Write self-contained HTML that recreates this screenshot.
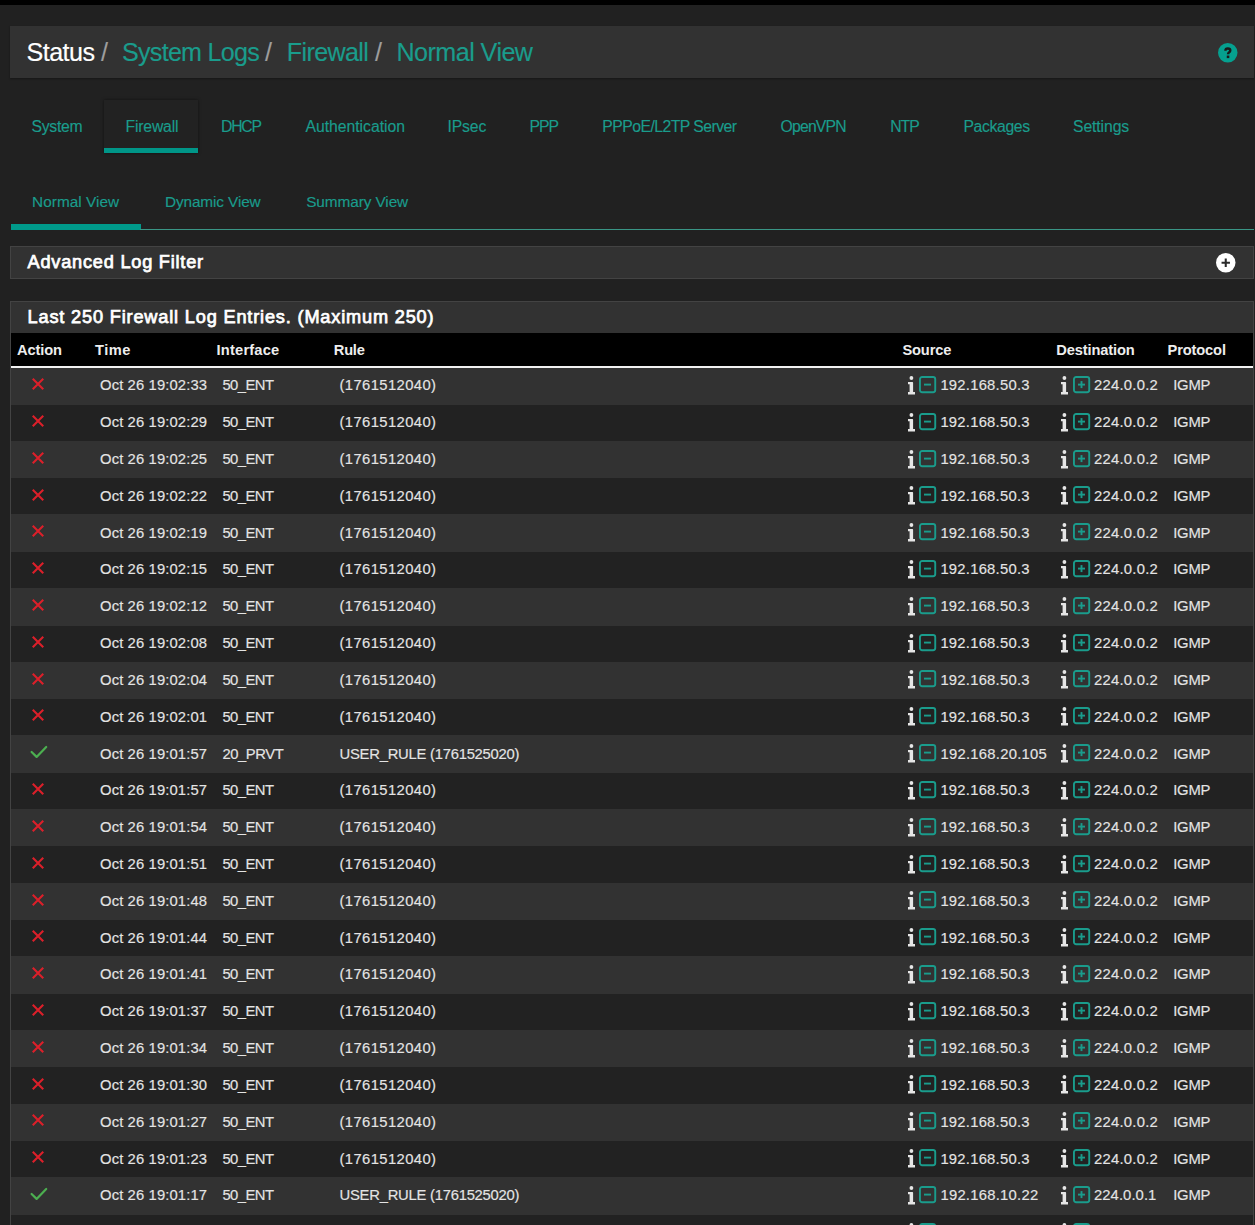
<!DOCTYPE html>
<html><head><meta charset="utf-8"><style>
html,body{margin:0;padding:0;width:1255px;height:1225px;overflow:hidden;background:#212121;}
body{position:relative;font-family:"Liberation Sans", sans-serif;}
.t{position:absolute;white-space:nowrap;line-height:1;-webkit-text-stroke:0.15px currentColor}
.ic{position:absolute;overflow:visible}
.row{position:absolute;left:11px;width:1242px}
.box{position:absolute}
</style></head><body>
<div class="box" style="left:0;top:0;width:1255px;height:5px;background:#000"></div>
<div class="box" style="left:10px;top:26px;width:1244px;height:52px;background:#323232;box-shadow:0 1px 2px rgba(0,0,0,.35)"></div>
<svg class="ic" style="left:1217.7px;top:42.7px" width="19.5" height="19.5" viewBox="0 0 20 20"><circle cx="10" cy="10" r="10" fill="#05a08f"/><path d="M7.6 7.9Q7.6 5.6 10.1 5.6Q12.6 5.6 12.6 7.6Q12.6 8.9 11.2 9.7Q10.3 10.3 10.3 11.5" stroke="#1a1a1a" stroke-width="2.5" fill="none"/><rect x="9.0" y="12.9" width="2.6" height="2.6" fill="#1a1a1a"/></svg>
<div class="box" style="left:104px;top:100px;width:94px;height:53px;background:#222222;box-shadow:0 0 3px rgba(0,0,0,.55)"></div>
<div class="box" style="left:104px;top:148px;width:94px;height:5px;background:#009688"></div>
<div class="box" style="left:10.5px;top:224px;width:130px;height:6px;background:#009a8b"></div>
<div class="box" style="left:140px;top:228.7px;width:1114px;height:1.3px;background:#3a9686"></div>
<div class="box" style="left:10px;top:246px;width:1242px;height:30.5px;background:#323232;border:1px solid #434343"></div>
<svg class="ic" style="left:1215.9px;top:252.8px" width="19.5" height="19.5" viewBox="0 0 20 20"><circle cx="10" cy="10" r="10" fill="#ffffff"/><path d="M10 5.7V14.3M5.7 10H14.3" stroke="#2a2a2a" stroke-width="2.1"/></svg>
<div class="box" style="left:10px;top:301px;width:1242px;height:1000px;background:#323232;border:1px solid #434343"></div>
<div class="box" style="left:11px;top:332.8px;width:1242px;height:33.5px;background:#000"></div>
<div class="box" style="left:11px;top:366.2px;width:1242px;height:2px;background:#f2f2f2"></div>
<div class="box" style="left:11px;top:368px;width:1242px;height:900px;background:#222222"></div>
<div class="row" style="top:368.00px;height:36.62px;background:#323232"></div><div class="row" style="top:440.84px;height:37.42px;background:#323232"></div><div class="row" style="top:514.47px;height:37.42px;background:#323232"></div><div class="row" style="top:588.11px;height:37.42px;background:#323232"></div><div class="row" style="top:661.74px;height:37.42px;background:#323232"></div><div class="row" style="top:734.88px;height:37.92px;background:#323232"></div><div class="row" style="top:809.02px;height:37.42px;background:#323232"></div><div class="row" style="top:882.65px;height:37.42px;background:#323232"></div><div class="row" style="top:956.29px;height:37.42px;background:#323232"></div><div class="row" style="top:1029.92px;height:37.42px;background:#323232"></div><div class="row" style="top:1103.56px;height:37.42px;background:#323232"></div><div class="row" style="top:1176.70px;height:37.92px;background:#323232"></div>
<div class="t" style="left:26.50px;top:40.12px;font-size:25.14px;font-weight:400;color:#ffffff;letter-spacing:-0.547px">Status</div><div class="t" style="left:100.90px;top:40.12px;font-size:25.14px;font-weight:400;color:#9e9e9e;letter-spacing:0.000px">/</div><div class="t" style="left:122.00px;top:40.12px;font-size:25.14px;font-weight:400;color:#1a9c8c;letter-spacing:-0.743px">System Logs</div><div class="t" style="left:265.00px;top:40.12px;font-size:25.14px;font-weight:400;color:#9e9e9e;letter-spacing:0.000px">/</div><div class="t" style="left:286.80px;top:40.12px;font-size:25.14px;font-weight:400;color:#1a9c8c;letter-spacing:-0.652px">Firewall</div><div class="t" style="left:375.00px;top:40.12px;font-size:25.14px;font-weight:400;color:#9e9e9e;letter-spacing:0.000px">/</div><div class="t" style="left:396.50px;top:40.12px;font-size:25.14px;font-weight:400;color:#1a9c8c;letter-spacing:-0.547px">Normal View</div><div class="t" style="left:31.60px;top:118.64px;font-size:15.78px;font-weight:400;color:#1a9c8c;letter-spacing:-0.312px">System</div><div class="t" style="left:125.50px;top:118.64px;font-size:15.78px;font-weight:400;color:#1a9c8c;letter-spacing:-0.188px">Firewall</div><div class="t" style="left:221.00px;top:118.64px;font-size:15.78px;font-weight:400;color:#1a9c8c;letter-spacing:-1.224px">DHCP</div><div class="t" style="left:305.40px;top:118.64px;font-size:15.78px;font-weight:400;color:#1a9c8c;letter-spacing:-0.017px">Authentication</div><div class="t" style="left:447.60px;top:118.64px;font-size:15.78px;font-weight:400;color:#1a9c8c;letter-spacing:-0.184px">IPsec</div><div class="t" style="left:529.40px;top:118.64px;font-size:15.78px;font-weight:400;color:#1a9c8c;letter-spacing:-1.023px">PPP</div><div class="t" style="left:602.30px;top:118.64px;font-size:15.78px;font-weight:400;color:#1a9c8c;letter-spacing:-0.546px">PPPoE/L2TP Server</div><div class="t" style="left:780.60px;top:118.64px;font-size:15.78px;font-weight:400;color:#1a9c8c;letter-spacing:-0.831px">OpenVPN</div><div class="t" style="left:890.20px;top:118.64px;font-size:15.78px;font-weight:400;color:#1a9c8c;letter-spacing:-1.023px">NTP</div><div class="t" style="left:963.40px;top:118.64px;font-size:15.78px;font-weight:400;color:#1a9c8c;letter-spacing:-0.364px">Packages</div><div class="t" style="left:1073.00px;top:118.64px;font-size:15.78px;font-weight:400;color:#1a9c8c;letter-spacing:-0.110px">Settings</div><div class="t" style="left:32.10px;top:194.00px;font-size:15.36px;font-weight:400;color:#1a9c8c;letter-spacing:0.022px">Normal View</div><div class="t" style="left:165.00px;top:194.00px;font-size:15.36px;font-weight:400;color:#1a9c8c;letter-spacing:-0.121px">Dynamic View</div><div class="t" style="left:306.20px;top:194.00px;font-size:15.36px;font-weight:400;color:#1a9c8c;letter-spacing:-0.091px">Summary View</div><div class="t" style="left:27.60px;top:252.63px;font-size:18.16px;font-weight:500;color:#ffffff;letter-spacing:0.779px;-webkit-text-stroke:0.75px currentColor">Advanced Log Filter</div><div class="t" style="left:27.60px;top:307.63px;font-size:18.16px;font-weight:500;color:#ffffff;letter-spacing:0.829px;-webkit-text-stroke:0.75px currentColor">Last 250 Firewall Log Entries. (Maximum 250)</div><div class="t" style="left:17.00px;top:342.59px;font-size:14.66px;font-weight:700;color:#eeeeee;letter-spacing:-0.119px;-webkit-text-stroke:0">Action</div><div class="t" style="left:95.00px;top:342.59px;font-size:14.66px;font-weight:700;color:#eeeeee;letter-spacing:0.482px;-webkit-text-stroke:0">Time</div><div class="t" style="left:216.60px;top:342.59px;font-size:14.66px;font-weight:700;color:#eeeeee;letter-spacing:0.186px;-webkit-text-stroke:0">Interface</div><div class="t" style="left:333.80px;top:342.59px;font-size:14.66px;font-weight:700;color:#eeeeee;letter-spacing:-0.255px;-webkit-text-stroke:0">Rule</div><div class="t" style="left:902.50px;top:342.59px;font-size:14.66px;font-weight:700;color:#eeeeee;letter-spacing:-0.178px;-webkit-text-stroke:0">Source</div><div class="t" style="left:1056.30px;top:342.59px;font-size:14.66px;font-weight:700;color:#eeeeee;letter-spacing:-0.131px;-webkit-text-stroke:0">Destination</div><div class="t" style="left:1167.60px;top:342.59px;font-size:14.66px;font-weight:700;color:#eeeeee;letter-spacing:-0.150px;-webkit-text-stroke:0">Protocol</div><div class="t" style="left:100.00px;top:378.37px;font-size:14.8px;font-weight:400;color:#e4e4e4;letter-spacing:0.121px">Oct 26 19:02:33</div><div class="t" style="left:222.40px;top:378.37px;font-size:14.8px;font-weight:400;color:#e4e4e4;letter-spacing:-0.519px">50_ENT</div><div class="t" style="left:339.50px;top:378.37px;font-size:14.8px;font-weight:400;color:#e4e4e4;letter-spacing:0.395px">(1761512040)</div><div class="t" style="left:940.40px;top:378.37px;font-size:14.8px;font-weight:400;color:#e4e4e4;letter-spacing:0.245px">192.168.50.3</div><div class="t" style="left:1094.00px;top:378.37px;font-size:14.8px;font-weight:400;color:#e4e4e4;letter-spacing:0.260px">224.0.0.2</div><div class="t" style="left:1173.20px;top:378.37px;font-size:14.8px;font-weight:400;color:#e4e4e4;letter-spacing:-0.176px">IGMP</div><div class="t" style="left:100.00px;top:415.19px;font-size:14.8px;font-weight:400;color:#e4e4e4;letter-spacing:0.121px">Oct 26 19:02:29</div><div class="t" style="left:222.40px;top:415.19px;font-size:14.8px;font-weight:400;color:#e4e4e4;letter-spacing:-0.519px">50_ENT</div><div class="t" style="left:339.50px;top:415.19px;font-size:14.8px;font-weight:400;color:#e4e4e4;letter-spacing:0.395px">(1761512040)</div><div class="t" style="left:940.40px;top:415.19px;font-size:14.8px;font-weight:400;color:#e4e4e4;letter-spacing:0.245px">192.168.50.3</div><div class="t" style="left:1094.00px;top:415.19px;font-size:14.8px;font-weight:400;color:#e4e4e4;letter-spacing:0.260px">224.0.0.2</div><div class="t" style="left:1173.20px;top:415.19px;font-size:14.8px;font-weight:400;color:#e4e4e4;letter-spacing:-0.176px">IGMP</div><div class="t" style="left:100.00px;top:452.01px;font-size:14.8px;font-weight:400;color:#e4e4e4;letter-spacing:0.121px">Oct 26 19:02:25</div><div class="t" style="left:222.40px;top:452.01px;font-size:14.8px;font-weight:400;color:#e4e4e4;letter-spacing:-0.519px">50_ENT</div><div class="t" style="left:339.50px;top:452.01px;font-size:14.8px;font-weight:400;color:#e4e4e4;letter-spacing:0.395px">(1761512040)</div><div class="t" style="left:940.40px;top:452.01px;font-size:14.8px;font-weight:400;color:#e4e4e4;letter-spacing:0.245px">192.168.50.3</div><div class="t" style="left:1094.00px;top:452.01px;font-size:14.8px;font-weight:400;color:#e4e4e4;letter-spacing:0.260px">224.0.0.2</div><div class="t" style="left:1173.20px;top:452.01px;font-size:14.8px;font-weight:400;color:#e4e4e4;letter-spacing:-0.176px">IGMP</div><div class="t" style="left:100.00px;top:488.83px;font-size:14.8px;font-weight:400;color:#e4e4e4;letter-spacing:0.121px">Oct 26 19:02:22</div><div class="t" style="left:222.40px;top:488.83px;font-size:14.8px;font-weight:400;color:#e4e4e4;letter-spacing:-0.519px">50_ENT</div><div class="t" style="left:339.50px;top:488.83px;font-size:14.8px;font-weight:400;color:#e4e4e4;letter-spacing:0.395px">(1761512040)</div><div class="t" style="left:940.40px;top:488.83px;font-size:14.8px;font-weight:400;color:#e4e4e4;letter-spacing:0.245px">192.168.50.3</div><div class="t" style="left:1094.00px;top:488.83px;font-size:14.8px;font-weight:400;color:#e4e4e4;letter-spacing:0.260px">224.0.0.2</div><div class="t" style="left:1173.20px;top:488.83px;font-size:14.8px;font-weight:400;color:#e4e4e4;letter-spacing:-0.176px">IGMP</div><div class="t" style="left:100.00px;top:525.64px;font-size:14.8px;font-weight:400;color:#e4e4e4;letter-spacing:0.121px">Oct 26 19:02:19</div><div class="t" style="left:222.40px;top:525.64px;font-size:14.8px;font-weight:400;color:#e4e4e4;letter-spacing:-0.519px">50_ENT</div><div class="t" style="left:339.50px;top:525.64px;font-size:14.8px;font-weight:400;color:#e4e4e4;letter-spacing:0.395px">(1761512040)</div><div class="t" style="left:940.40px;top:525.64px;font-size:14.8px;font-weight:400;color:#e4e4e4;letter-spacing:0.245px">192.168.50.3</div><div class="t" style="left:1094.00px;top:525.64px;font-size:14.8px;font-weight:400;color:#e4e4e4;letter-spacing:0.260px">224.0.0.2</div><div class="t" style="left:1173.20px;top:525.64px;font-size:14.8px;font-weight:400;color:#e4e4e4;letter-spacing:-0.176px">IGMP</div><div class="t" style="left:100.00px;top:562.46px;font-size:14.8px;font-weight:400;color:#e4e4e4;letter-spacing:0.121px">Oct 26 19:02:15</div><div class="t" style="left:222.40px;top:562.46px;font-size:14.8px;font-weight:400;color:#e4e4e4;letter-spacing:-0.519px">50_ENT</div><div class="t" style="left:339.50px;top:562.46px;font-size:14.8px;font-weight:400;color:#e4e4e4;letter-spacing:0.395px">(1761512040)</div><div class="t" style="left:940.40px;top:562.46px;font-size:14.8px;font-weight:400;color:#e4e4e4;letter-spacing:0.245px">192.168.50.3</div><div class="t" style="left:1094.00px;top:562.46px;font-size:14.8px;font-weight:400;color:#e4e4e4;letter-spacing:0.260px">224.0.0.2</div><div class="t" style="left:1173.20px;top:562.46px;font-size:14.8px;font-weight:400;color:#e4e4e4;letter-spacing:-0.176px">IGMP</div><div class="t" style="left:100.00px;top:599.28px;font-size:14.8px;font-weight:400;color:#e4e4e4;letter-spacing:0.121px">Oct 26 19:02:12</div><div class="t" style="left:222.40px;top:599.28px;font-size:14.8px;font-weight:400;color:#e4e4e4;letter-spacing:-0.519px">50_ENT</div><div class="t" style="left:339.50px;top:599.28px;font-size:14.8px;font-weight:400;color:#e4e4e4;letter-spacing:0.395px">(1761512040)</div><div class="t" style="left:940.40px;top:599.28px;font-size:14.8px;font-weight:400;color:#e4e4e4;letter-spacing:0.245px">192.168.50.3</div><div class="t" style="left:1094.00px;top:599.28px;font-size:14.8px;font-weight:400;color:#e4e4e4;letter-spacing:0.260px">224.0.0.2</div><div class="t" style="left:1173.20px;top:599.28px;font-size:14.8px;font-weight:400;color:#e4e4e4;letter-spacing:-0.176px">IGMP</div><div class="t" style="left:100.00px;top:636.10px;font-size:14.8px;font-weight:400;color:#e4e4e4;letter-spacing:0.121px">Oct 26 19:02:08</div><div class="t" style="left:222.40px;top:636.10px;font-size:14.8px;font-weight:400;color:#e4e4e4;letter-spacing:-0.519px">50_ENT</div><div class="t" style="left:339.50px;top:636.10px;font-size:14.8px;font-weight:400;color:#e4e4e4;letter-spacing:0.395px">(1761512040)</div><div class="t" style="left:940.40px;top:636.10px;font-size:14.8px;font-weight:400;color:#e4e4e4;letter-spacing:0.245px">192.168.50.3</div><div class="t" style="left:1094.00px;top:636.10px;font-size:14.8px;font-weight:400;color:#e4e4e4;letter-spacing:0.260px">224.0.0.2</div><div class="t" style="left:1173.20px;top:636.10px;font-size:14.8px;font-weight:400;color:#e4e4e4;letter-spacing:-0.176px">IGMP</div><div class="t" style="left:100.00px;top:672.92px;font-size:14.8px;font-weight:400;color:#e4e4e4;letter-spacing:0.121px">Oct 26 19:02:04</div><div class="t" style="left:222.40px;top:672.92px;font-size:14.8px;font-weight:400;color:#e4e4e4;letter-spacing:-0.519px">50_ENT</div><div class="t" style="left:339.50px;top:672.92px;font-size:14.8px;font-weight:400;color:#e4e4e4;letter-spacing:0.395px">(1761512040)</div><div class="t" style="left:940.40px;top:672.92px;font-size:14.8px;font-weight:400;color:#e4e4e4;letter-spacing:0.245px">192.168.50.3</div><div class="t" style="left:1094.00px;top:672.92px;font-size:14.8px;font-weight:400;color:#e4e4e4;letter-spacing:0.260px">224.0.0.2</div><div class="t" style="left:1173.20px;top:672.92px;font-size:14.8px;font-weight:400;color:#e4e4e4;letter-spacing:-0.176px">IGMP</div><div class="t" style="left:100.00px;top:709.73px;font-size:14.8px;font-weight:400;color:#e4e4e4;letter-spacing:0.121px">Oct 26 19:02:01</div><div class="t" style="left:222.40px;top:709.73px;font-size:14.8px;font-weight:400;color:#e4e4e4;letter-spacing:-0.519px">50_ENT</div><div class="t" style="left:339.50px;top:709.73px;font-size:14.8px;font-weight:400;color:#e4e4e4;letter-spacing:0.395px">(1761512040)</div><div class="t" style="left:940.40px;top:709.73px;font-size:14.8px;font-weight:400;color:#e4e4e4;letter-spacing:0.245px">192.168.50.3</div><div class="t" style="left:1094.00px;top:709.73px;font-size:14.8px;font-weight:400;color:#e4e4e4;letter-spacing:0.260px">224.0.0.2</div><div class="t" style="left:1173.20px;top:709.73px;font-size:14.8px;font-weight:400;color:#e4e4e4;letter-spacing:-0.176px">IGMP</div><div class="t" style="left:100.00px;top:746.55px;font-size:14.8px;font-weight:400;color:#e4e4e4;letter-spacing:0.121px">Oct 26 19:01:57</div><div class="t" style="left:222.40px;top:746.55px;font-size:14.8px;font-weight:400;color:#e4e4e4;letter-spacing:-0.432px">20_PRVT</div><div class="t" style="left:339.50px;top:746.55px;font-size:14.8px;font-weight:400;color:#e4e4e4;letter-spacing:-0.242px">USER_RULE (1761525020)</div><div class="t" style="left:940.40px;top:746.55px;font-size:14.8px;font-weight:400;color:#e4e4e4;letter-spacing:0.272px">192.168.20.105</div><div class="t" style="left:1094.00px;top:746.55px;font-size:14.8px;font-weight:400;color:#e4e4e4;letter-spacing:0.260px">224.0.0.2</div><div class="t" style="left:1173.20px;top:746.55px;font-size:14.8px;font-weight:400;color:#e4e4e4;letter-spacing:-0.176px">IGMP</div><div class="t" style="left:100.00px;top:783.37px;font-size:14.8px;font-weight:400;color:#e4e4e4;letter-spacing:0.121px">Oct 26 19:01:57</div><div class="t" style="left:222.40px;top:783.37px;font-size:14.8px;font-weight:400;color:#e4e4e4;letter-spacing:-0.519px">50_ENT</div><div class="t" style="left:339.50px;top:783.37px;font-size:14.8px;font-weight:400;color:#e4e4e4;letter-spacing:0.395px">(1761512040)</div><div class="t" style="left:940.40px;top:783.37px;font-size:14.8px;font-weight:400;color:#e4e4e4;letter-spacing:0.245px">192.168.50.3</div><div class="t" style="left:1094.00px;top:783.37px;font-size:14.8px;font-weight:400;color:#e4e4e4;letter-spacing:0.260px">224.0.0.2</div><div class="t" style="left:1173.20px;top:783.37px;font-size:14.8px;font-weight:400;color:#e4e4e4;letter-spacing:-0.176px">IGMP</div><div class="t" style="left:100.00px;top:820.19px;font-size:14.8px;font-weight:400;color:#e4e4e4;letter-spacing:0.121px">Oct 26 19:01:54</div><div class="t" style="left:222.40px;top:820.19px;font-size:14.8px;font-weight:400;color:#e4e4e4;letter-spacing:-0.519px">50_ENT</div><div class="t" style="left:339.50px;top:820.19px;font-size:14.8px;font-weight:400;color:#e4e4e4;letter-spacing:0.395px">(1761512040)</div><div class="t" style="left:940.40px;top:820.19px;font-size:14.8px;font-weight:400;color:#e4e4e4;letter-spacing:0.245px">192.168.50.3</div><div class="t" style="left:1094.00px;top:820.19px;font-size:14.8px;font-weight:400;color:#e4e4e4;letter-spacing:0.260px">224.0.0.2</div><div class="t" style="left:1173.20px;top:820.19px;font-size:14.8px;font-weight:400;color:#e4e4e4;letter-spacing:-0.176px">IGMP</div><div class="t" style="left:100.00px;top:857.01px;font-size:14.8px;font-weight:400;color:#e4e4e4;letter-spacing:0.121px">Oct 26 19:01:51</div><div class="t" style="left:222.40px;top:857.01px;font-size:14.8px;font-weight:400;color:#e4e4e4;letter-spacing:-0.519px">50_ENT</div><div class="t" style="left:339.50px;top:857.01px;font-size:14.8px;font-weight:400;color:#e4e4e4;letter-spacing:0.395px">(1761512040)</div><div class="t" style="left:940.40px;top:857.01px;font-size:14.8px;font-weight:400;color:#e4e4e4;letter-spacing:0.245px">192.168.50.3</div><div class="t" style="left:1094.00px;top:857.01px;font-size:14.8px;font-weight:400;color:#e4e4e4;letter-spacing:0.260px">224.0.0.2</div><div class="t" style="left:1173.20px;top:857.01px;font-size:14.8px;font-weight:400;color:#e4e4e4;letter-spacing:-0.176px">IGMP</div><div class="t" style="left:100.00px;top:893.82px;font-size:14.8px;font-weight:400;color:#e4e4e4;letter-spacing:0.121px">Oct 26 19:01:48</div><div class="t" style="left:222.40px;top:893.82px;font-size:14.8px;font-weight:400;color:#e4e4e4;letter-spacing:-0.519px">50_ENT</div><div class="t" style="left:339.50px;top:893.82px;font-size:14.8px;font-weight:400;color:#e4e4e4;letter-spacing:0.395px">(1761512040)</div><div class="t" style="left:940.40px;top:893.82px;font-size:14.8px;font-weight:400;color:#e4e4e4;letter-spacing:0.245px">192.168.50.3</div><div class="t" style="left:1094.00px;top:893.82px;font-size:14.8px;font-weight:400;color:#e4e4e4;letter-spacing:0.260px">224.0.0.2</div><div class="t" style="left:1173.20px;top:893.82px;font-size:14.8px;font-weight:400;color:#e4e4e4;letter-spacing:-0.176px">IGMP</div><div class="t" style="left:100.00px;top:930.64px;font-size:14.8px;font-weight:400;color:#e4e4e4;letter-spacing:0.121px">Oct 26 19:01:44</div><div class="t" style="left:222.40px;top:930.64px;font-size:14.8px;font-weight:400;color:#e4e4e4;letter-spacing:-0.519px">50_ENT</div><div class="t" style="left:339.50px;top:930.64px;font-size:14.8px;font-weight:400;color:#e4e4e4;letter-spacing:0.395px">(1761512040)</div><div class="t" style="left:940.40px;top:930.64px;font-size:14.8px;font-weight:400;color:#e4e4e4;letter-spacing:0.245px">192.168.50.3</div><div class="t" style="left:1094.00px;top:930.64px;font-size:14.8px;font-weight:400;color:#e4e4e4;letter-spacing:0.260px">224.0.0.2</div><div class="t" style="left:1173.20px;top:930.64px;font-size:14.8px;font-weight:400;color:#e4e4e4;letter-spacing:-0.176px">IGMP</div><div class="t" style="left:100.00px;top:967.46px;font-size:14.8px;font-weight:400;color:#e4e4e4;letter-spacing:0.121px">Oct 26 19:01:41</div><div class="t" style="left:222.40px;top:967.46px;font-size:14.8px;font-weight:400;color:#e4e4e4;letter-spacing:-0.519px">50_ENT</div><div class="t" style="left:339.50px;top:967.46px;font-size:14.8px;font-weight:400;color:#e4e4e4;letter-spacing:0.395px">(1761512040)</div><div class="t" style="left:940.40px;top:967.46px;font-size:14.8px;font-weight:400;color:#e4e4e4;letter-spacing:0.245px">192.168.50.3</div><div class="t" style="left:1094.00px;top:967.46px;font-size:14.8px;font-weight:400;color:#e4e4e4;letter-spacing:0.260px">224.0.0.2</div><div class="t" style="left:1173.20px;top:967.46px;font-size:14.8px;font-weight:400;color:#e4e4e4;letter-spacing:-0.176px">IGMP</div><div class="t" style="left:100.00px;top:1004.28px;font-size:14.8px;font-weight:400;color:#e4e4e4;letter-spacing:0.121px">Oct 26 19:01:37</div><div class="t" style="left:222.40px;top:1004.28px;font-size:14.8px;font-weight:400;color:#e4e4e4;letter-spacing:-0.519px">50_ENT</div><div class="t" style="left:339.50px;top:1004.28px;font-size:14.8px;font-weight:400;color:#e4e4e4;letter-spacing:0.395px">(1761512040)</div><div class="t" style="left:940.40px;top:1004.28px;font-size:14.8px;font-weight:400;color:#e4e4e4;letter-spacing:0.245px">192.168.50.3</div><div class="t" style="left:1094.00px;top:1004.28px;font-size:14.8px;font-weight:400;color:#e4e4e4;letter-spacing:0.260px">224.0.0.2</div><div class="t" style="left:1173.20px;top:1004.28px;font-size:14.8px;font-weight:400;color:#e4e4e4;letter-spacing:-0.176px">IGMP</div><div class="t" style="left:100.00px;top:1041.10px;font-size:14.8px;font-weight:400;color:#e4e4e4;letter-spacing:0.121px">Oct 26 19:01:34</div><div class="t" style="left:222.40px;top:1041.10px;font-size:14.8px;font-weight:400;color:#e4e4e4;letter-spacing:-0.519px">50_ENT</div><div class="t" style="left:339.50px;top:1041.10px;font-size:14.8px;font-weight:400;color:#e4e4e4;letter-spacing:0.395px">(1761512040)</div><div class="t" style="left:940.40px;top:1041.10px;font-size:14.8px;font-weight:400;color:#e4e4e4;letter-spacing:0.245px">192.168.50.3</div><div class="t" style="left:1094.00px;top:1041.10px;font-size:14.8px;font-weight:400;color:#e4e4e4;letter-spacing:0.260px">224.0.0.2</div><div class="t" style="left:1173.20px;top:1041.10px;font-size:14.8px;font-weight:400;color:#e4e4e4;letter-spacing:-0.176px">IGMP</div><div class="t" style="left:100.00px;top:1077.91px;font-size:14.8px;font-weight:400;color:#e4e4e4;letter-spacing:0.121px">Oct 26 19:01:30</div><div class="t" style="left:222.40px;top:1077.91px;font-size:14.8px;font-weight:400;color:#e4e4e4;letter-spacing:-0.519px">50_ENT</div><div class="t" style="left:339.50px;top:1077.91px;font-size:14.8px;font-weight:400;color:#e4e4e4;letter-spacing:0.395px">(1761512040)</div><div class="t" style="left:940.40px;top:1077.91px;font-size:14.8px;font-weight:400;color:#e4e4e4;letter-spacing:0.245px">192.168.50.3</div><div class="t" style="left:1094.00px;top:1077.91px;font-size:14.8px;font-weight:400;color:#e4e4e4;letter-spacing:0.260px">224.0.0.2</div><div class="t" style="left:1173.20px;top:1077.91px;font-size:14.8px;font-weight:400;color:#e4e4e4;letter-spacing:-0.176px">IGMP</div><div class="t" style="left:100.00px;top:1114.73px;font-size:14.8px;font-weight:400;color:#e4e4e4;letter-spacing:0.121px">Oct 26 19:01:27</div><div class="t" style="left:222.40px;top:1114.73px;font-size:14.8px;font-weight:400;color:#e4e4e4;letter-spacing:-0.519px">50_ENT</div><div class="t" style="left:339.50px;top:1114.73px;font-size:14.8px;font-weight:400;color:#e4e4e4;letter-spacing:0.395px">(1761512040)</div><div class="t" style="left:940.40px;top:1114.73px;font-size:14.8px;font-weight:400;color:#e4e4e4;letter-spacing:0.245px">192.168.50.3</div><div class="t" style="left:1094.00px;top:1114.73px;font-size:14.8px;font-weight:400;color:#e4e4e4;letter-spacing:0.260px">224.0.0.2</div><div class="t" style="left:1173.20px;top:1114.73px;font-size:14.8px;font-weight:400;color:#e4e4e4;letter-spacing:-0.176px">IGMP</div><div class="t" style="left:100.00px;top:1151.55px;font-size:14.8px;font-weight:400;color:#e4e4e4;letter-spacing:0.121px">Oct 26 19:01:23</div><div class="t" style="left:222.40px;top:1151.55px;font-size:14.8px;font-weight:400;color:#e4e4e4;letter-spacing:-0.519px">50_ENT</div><div class="t" style="left:339.50px;top:1151.55px;font-size:14.8px;font-weight:400;color:#e4e4e4;letter-spacing:0.395px">(1761512040)</div><div class="t" style="left:940.40px;top:1151.55px;font-size:14.8px;font-weight:400;color:#e4e4e4;letter-spacing:0.245px">192.168.50.3</div><div class="t" style="left:1094.00px;top:1151.55px;font-size:14.8px;font-weight:400;color:#e4e4e4;letter-spacing:0.260px">224.0.0.2</div><div class="t" style="left:1173.20px;top:1151.55px;font-size:14.8px;font-weight:400;color:#e4e4e4;letter-spacing:-0.176px">IGMP</div><div class="t" style="left:100.00px;top:1188.37px;font-size:14.8px;font-weight:400;color:#e4e4e4;letter-spacing:0.121px">Oct 26 19:01:17</div><div class="t" style="left:222.40px;top:1188.37px;font-size:14.8px;font-weight:400;color:#e4e4e4;letter-spacing:-0.519px">50_ENT</div><div class="t" style="left:339.50px;top:1188.37px;font-size:14.8px;font-weight:400;color:#e4e4e4;letter-spacing:-0.242px">USER_RULE (1761525020)</div><div class="t" style="left:940.40px;top:1188.37px;font-size:14.8px;font-weight:400;color:#e4e4e4;letter-spacing:0.263px">192.168.10.22</div><div class="t" style="left:1094.00px;top:1188.37px;font-size:14.8px;font-weight:400;color:#e4e4e4;letter-spacing:0.073px">224.0.0.1</div><div class="t" style="left:1173.20px;top:1188.37px;font-size:14.8px;font-weight:400;color:#e4e4e4;letter-spacing:-0.176px">IGMP</div><div class="t" style="left:100.00px;top:1225.19px;font-size:14.8px;font-weight:400;color:#e4e4e4;letter-spacing:0.121px">Oct 26 19:01:14</div><div class="t" style="left:222.40px;top:1225.19px;font-size:14.8px;font-weight:400;color:#e4e4e4;letter-spacing:-0.519px">50_ENT</div><div class="t" style="left:339.50px;top:1225.19px;font-size:14.8px;font-weight:400;color:#e4e4e4;letter-spacing:0.395px">(1761512040)</div><div class="t" style="left:940.40px;top:1225.19px;font-size:14.8px;font-weight:400;color:#e4e4e4;letter-spacing:0.245px">192.168.50.3</div><div class="t" style="left:1094.00px;top:1225.19px;font-size:14.8px;font-weight:400;color:#e4e4e4;letter-spacing:0.260px">224.0.0.2</div><div class="t" style="left:1173.20px;top:1225.19px;font-size:14.8px;font-weight:400;color:#e4e4e4;letter-spacing:-0.176px">IGMP</div>
<svg class="ic" style="left:30.90px;top:377.05px" width="14" height="14" viewBox="0 0 14 14"><path d="M1.75 1.75L12.25 12.25M12.25 1.75L1.75 12.25" stroke="#dc1f2a" stroke-width="2.1"/></svg><svg class="ic" style="left:907.90px;top:375.90px" width="8" height="19" viewBox="0 0 8 19"><circle cx="3.4" cy="2.0" r="1.9" fill="#e6e6e6"/><path d="M0 6.1H4.4Q5.1 6.1 5.1 6.8V16H7V18.5H0V16H1.6V8.3H0Z" fill="#e6e6e6"/></svg><svg class="ic" style="left:918.80px;top:375.90px" width="17.2" height="17.2" viewBox="0 0 17.2 17.2"><rect x="0.95" y="0.95" width="15.3" height="15.3" rx="2.2" fill="none" stroke="#1a9c8c" stroke-width="1.9"/><path d="M5 8.6H12" stroke="#1a9c8c" stroke-width="1.9"/></svg><svg class="ic" style="left:1061.40px;top:375.90px" width="8" height="19" viewBox="0 0 8 19"><circle cx="3.4" cy="2.0" r="1.9" fill="#e6e6e6"/><path d="M0 6.1H4.4Q5.1 6.1 5.1 6.8V16H7V18.5H0V16H1.6V8.3H0Z" fill="#e6e6e6"/></svg><svg class="ic" style="left:1072.50px;top:375.90px" width="17.2" height="17.2" viewBox="0 0 17.2 17.2"><rect x="0.95" y="0.95" width="15.3" height="15.3" rx="2.2" fill="none" stroke="#1a9c8c" stroke-width="1.9"/><path d="M5 8.6H12" stroke="#1a9c8c" stroke-width="1.9"/><path d="M8.5 5.1V12.1" stroke="#1a9c8c" stroke-width="1.9"/></svg><svg class="ic" style="left:30.90px;top:413.87px" width="14" height="14" viewBox="0 0 14 14"><path d="M1.75 1.75L12.25 12.25M12.25 1.75L1.75 12.25" stroke="#dc1f2a" stroke-width="2.1"/></svg><svg class="ic" style="left:907.90px;top:412.72px" width="8" height="19" viewBox="0 0 8 19"><circle cx="3.4" cy="2.0" r="1.9" fill="#e6e6e6"/><path d="M0 6.1H4.4Q5.1 6.1 5.1 6.8V16H7V18.5H0V16H1.6V8.3H0Z" fill="#e6e6e6"/></svg><svg class="ic" style="left:918.80px;top:412.72px" width="17.2" height="17.2" viewBox="0 0 17.2 17.2"><rect x="0.95" y="0.95" width="15.3" height="15.3" rx="2.2" fill="none" stroke="#1a9c8c" stroke-width="1.9"/><path d="M5 8.6H12" stroke="#1a9c8c" stroke-width="1.9"/></svg><svg class="ic" style="left:1061.40px;top:412.72px" width="8" height="19" viewBox="0 0 8 19"><circle cx="3.4" cy="2.0" r="1.9" fill="#e6e6e6"/><path d="M0 6.1H4.4Q5.1 6.1 5.1 6.8V16H7V18.5H0V16H1.6V8.3H0Z" fill="#e6e6e6"/></svg><svg class="ic" style="left:1072.50px;top:412.72px" width="17.2" height="17.2" viewBox="0 0 17.2 17.2"><rect x="0.95" y="0.95" width="15.3" height="15.3" rx="2.2" fill="none" stroke="#1a9c8c" stroke-width="1.9"/><path d="M5 8.6H12" stroke="#1a9c8c" stroke-width="1.9"/><path d="M8.5 5.1V12.1" stroke="#1a9c8c" stroke-width="1.9"/></svg><svg class="ic" style="left:30.90px;top:450.69px" width="14" height="14" viewBox="0 0 14 14"><path d="M1.75 1.75L12.25 12.25M12.25 1.75L1.75 12.25" stroke="#dc1f2a" stroke-width="2.1"/></svg><svg class="ic" style="left:907.90px;top:449.54px" width="8" height="19" viewBox="0 0 8 19"><circle cx="3.4" cy="2.0" r="1.9" fill="#e6e6e6"/><path d="M0 6.1H4.4Q5.1 6.1 5.1 6.8V16H7V18.5H0V16H1.6V8.3H0Z" fill="#e6e6e6"/></svg><svg class="ic" style="left:918.80px;top:449.54px" width="17.2" height="17.2" viewBox="0 0 17.2 17.2"><rect x="0.95" y="0.95" width="15.3" height="15.3" rx="2.2" fill="none" stroke="#1a9c8c" stroke-width="1.9"/><path d="M5 8.6H12" stroke="#1a9c8c" stroke-width="1.9"/></svg><svg class="ic" style="left:1061.40px;top:449.54px" width="8" height="19" viewBox="0 0 8 19"><circle cx="3.4" cy="2.0" r="1.9" fill="#e6e6e6"/><path d="M0 6.1H4.4Q5.1 6.1 5.1 6.8V16H7V18.5H0V16H1.6V8.3H0Z" fill="#e6e6e6"/></svg><svg class="ic" style="left:1072.50px;top:449.54px" width="17.2" height="17.2" viewBox="0 0 17.2 17.2"><rect x="0.95" y="0.95" width="15.3" height="15.3" rx="2.2" fill="none" stroke="#1a9c8c" stroke-width="1.9"/><path d="M5 8.6H12" stroke="#1a9c8c" stroke-width="1.9"/><path d="M8.5 5.1V12.1" stroke="#1a9c8c" stroke-width="1.9"/></svg><svg class="ic" style="left:30.90px;top:487.50px" width="14" height="14" viewBox="0 0 14 14"><path d="M1.75 1.75L12.25 12.25M12.25 1.75L1.75 12.25" stroke="#dc1f2a" stroke-width="2.1"/></svg><svg class="ic" style="left:907.90px;top:486.35px" width="8" height="19" viewBox="0 0 8 19"><circle cx="3.4" cy="2.0" r="1.9" fill="#e6e6e6"/><path d="M0 6.1H4.4Q5.1 6.1 5.1 6.8V16H7V18.5H0V16H1.6V8.3H0Z" fill="#e6e6e6"/></svg><svg class="ic" style="left:918.80px;top:486.35px" width="17.2" height="17.2" viewBox="0 0 17.2 17.2"><rect x="0.95" y="0.95" width="15.3" height="15.3" rx="2.2" fill="none" stroke="#1a9c8c" stroke-width="1.9"/><path d="M5 8.6H12" stroke="#1a9c8c" stroke-width="1.9"/></svg><svg class="ic" style="left:1061.40px;top:486.35px" width="8" height="19" viewBox="0 0 8 19"><circle cx="3.4" cy="2.0" r="1.9" fill="#e6e6e6"/><path d="M0 6.1H4.4Q5.1 6.1 5.1 6.8V16H7V18.5H0V16H1.6V8.3H0Z" fill="#e6e6e6"/></svg><svg class="ic" style="left:1072.50px;top:486.35px" width="17.2" height="17.2" viewBox="0 0 17.2 17.2"><rect x="0.95" y="0.95" width="15.3" height="15.3" rx="2.2" fill="none" stroke="#1a9c8c" stroke-width="1.9"/><path d="M5 8.6H12" stroke="#1a9c8c" stroke-width="1.9"/><path d="M8.5 5.1V12.1" stroke="#1a9c8c" stroke-width="1.9"/></svg><svg class="ic" style="left:30.90px;top:524.32px" width="14" height="14" viewBox="0 0 14 14"><path d="M1.75 1.75L12.25 12.25M12.25 1.75L1.75 12.25" stroke="#dc1f2a" stroke-width="2.1"/></svg><svg class="ic" style="left:907.90px;top:523.17px" width="8" height="19" viewBox="0 0 8 19"><circle cx="3.4" cy="2.0" r="1.9" fill="#e6e6e6"/><path d="M0 6.1H4.4Q5.1 6.1 5.1 6.8V16H7V18.5H0V16H1.6V8.3H0Z" fill="#e6e6e6"/></svg><svg class="ic" style="left:918.80px;top:523.17px" width="17.2" height="17.2" viewBox="0 0 17.2 17.2"><rect x="0.95" y="0.95" width="15.3" height="15.3" rx="2.2" fill="none" stroke="#1a9c8c" stroke-width="1.9"/><path d="M5 8.6H12" stroke="#1a9c8c" stroke-width="1.9"/></svg><svg class="ic" style="left:1061.40px;top:523.17px" width="8" height="19" viewBox="0 0 8 19"><circle cx="3.4" cy="2.0" r="1.9" fill="#e6e6e6"/><path d="M0 6.1H4.4Q5.1 6.1 5.1 6.8V16H7V18.5H0V16H1.6V8.3H0Z" fill="#e6e6e6"/></svg><svg class="ic" style="left:1072.50px;top:523.17px" width="17.2" height="17.2" viewBox="0 0 17.2 17.2"><rect x="0.95" y="0.95" width="15.3" height="15.3" rx="2.2" fill="none" stroke="#1a9c8c" stroke-width="1.9"/><path d="M5 8.6H12" stroke="#1a9c8c" stroke-width="1.9"/><path d="M8.5 5.1V12.1" stroke="#1a9c8c" stroke-width="1.9"/></svg><svg class="ic" style="left:30.90px;top:561.14px" width="14" height="14" viewBox="0 0 14 14"><path d="M1.75 1.75L12.25 12.25M12.25 1.75L1.75 12.25" stroke="#dc1f2a" stroke-width="2.1"/></svg><svg class="ic" style="left:907.90px;top:559.99px" width="8" height="19" viewBox="0 0 8 19"><circle cx="3.4" cy="2.0" r="1.9" fill="#e6e6e6"/><path d="M0 6.1H4.4Q5.1 6.1 5.1 6.8V16H7V18.5H0V16H1.6V8.3H0Z" fill="#e6e6e6"/></svg><svg class="ic" style="left:918.80px;top:559.99px" width="17.2" height="17.2" viewBox="0 0 17.2 17.2"><rect x="0.95" y="0.95" width="15.3" height="15.3" rx="2.2" fill="none" stroke="#1a9c8c" stroke-width="1.9"/><path d="M5 8.6H12" stroke="#1a9c8c" stroke-width="1.9"/></svg><svg class="ic" style="left:1061.40px;top:559.99px" width="8" height="19" viewBox="0 0 8 19"><circle cx="3.4" cy="2.0" r="1.9" fill="#e6e6e6"/><path d="M0 6.1H4.4Q5.1 6.1 5.1 6.8V16H7V18.5H0V16H1.6V8.3H0Z" fill="#e6e6e6"/></svg><svg class="ic" style="left:1072.50px;top:559.99px" width="17.2" height="17.2" viewBox="0 0 17.2 17.2"><rect x="0.95" y="0.95" width="15.3" height="15.3" rx="2.2" fill="none" stroke="#1a9c8c" stroke-width="1.9"/><path d="M5 8.6H12" stroke="#1a9c8c" stroke-width="1.9"/><path d="M8.5 5.1V12.1" stroke="#1a9c8c" stroke-width="1.9"/></svg><svg class="ic" style="left:30.90px;top:597.96px" width="14" height="14" viewBox="0 0 14 14"><path d="M1.75 1.75L12.25 12.25M12.25 1.75L1.75 12.25" stroke="#dc1f2a" stroke-width="2.1"/></svg><svg class="ic" style="left:907.90px;top:596.81px" width="8" height="19" viewBox="0 0 8 19"><circle cx="3.4" cy="2.0" r="1.9" fill="#e6e6e6"/><path d="M0 6.1H4.4Q5.1 6.1 5.1 6.8V16H7V18.5H0V16H1.6V8.3H0Z" fill="#e6e6e6"/></svg><svg class="ic" style="left:918.80px;top:596.81px" width="17.2" height="17.2" viewBox="0 0 17.2 17.2"><rect x="0.95" y="0.95" width="15.3" height="15.3" rx="2.2" fill="none" stroke="#1a9c8c" stroke-width="1.9"/><path d="M5 8.6H12" stroke="#1a9c8c" stroke-width="1.9"/></svg><svg class="ic" style="left:1061.40px;top:596.81px" width="8" height="19" viewBox="0 0 8 19"><circle cx="3.4" cy="2.0" r="1.9" fill="#e6e6e6"/><path d="M0 6.1H4.4Q5.1 6.1 5.1 6.8V16H7V18.5H0V16H1.6V8.3H0Z" fill="#e6e6e6"/></svg><svg class="ic" style="left:1072.50px;top:596.81px" width="17.2" height="17.2" viewBox="0 0 17.2 17.2"><rect x="0.95" y="0.95" width="15.3" height="15.3" rx="2.2" fill="none" stroke="#1a9c8c" stroke-width="1.9"/><path d="M5 8.6H12" stroke="#1a9c8c" stroke-width="1.9"/><path d="M8.5 5.1V12.1" stroke="#1a9c8c" stroke-width="1.9"/></svg><svg class="ic" style="left:30.90px;top:634.78px" width="14" height="14" viewBox="0 0 14 14"><path d="M1.75 1.75L12.25 12.25M12.25 1.75L1.75 12.25" stroke="#dc1f2a" stroke-width="2.1"/></svg><svg class="ic" style="left:907.90px;top:633.63px" width="8" height="19" viewBox="0 0 8 19"><circle cx="3.4" cy="2.0" r="1.9" fill="#e6e6e6"/><path d="M0 6.1H4.4Q5.1 6.1 5.1 6.8V16H7V18.5H0V16H1.6V8.3H0Z" fill="#e6e6e6"/></svg><svg class="ic" style="left:918.80px;top:633.63px" width="17.2" height="17.2" viewBox="0 0 17.2 17.2"><rect x="0.95" y="0.95" width="15.3" height="15.3" rx="2.2" fill="none" stroke="#1a9c8c" stroke-width="1.9"/><path d="M5 8.6H12" stroke="#1a9c8c" stroke-width="1.9"/></svg><svg class="ic" style="left:1061.40px;top:633.63px" width="8" height="19" viewBox="0 0 8 19"><circle cx="3.4" cy="2.0" r="1.9" fill="#e6e6e6"/><path d="M0 6.1H4.4Q5.1 6.1 5.1 6.8V16H7V18.5H0V16H1.6V8.3H0Z" fill="#e6e6e6"/></svg><svg class="ic" style="left:1072.50px;top:633.63px" width="17.2" height="17.2" viewBox="0 0 17.2 17.2"><rect x="0.95" y="0.95" width="15.3" height="15.3" rx="2.2" fill="none" stroke="#1a9c8c" stroke-width="1.9"/><path d="M5 8.6H12" stroke="#1a9c8c" stroke-width="1.9"/><path d="M8.5 5.1V12.1" stroke="#1a9c8c" stroke-width="1.9"/></svg><svg class="ic" style="left:30.90px;top:671.59px" width="14" height="14" viewBox="0 0 14 14"><path d="M1.75 1.75L12.25 12.25M12.25 1.75L1.75 12.25" stroke="#dc1f2a" stroke-width="2.1"/></svg><svg class="ic" style="left:907.90px;top:670.44px" width="8" height="19" viewBox="0 0 8 19"><circle cx="3.4" cy="2.0" r="1.9" fill="#e6e6e6"/><path d="M0 6.1H4.4Q5.1 6.1 5.1 6.8V16H7V18.5H0V16H1.6V8.3H0Z" fill="#e6e6e6"/></svg><svg class="ic" style="left:918.80px;top:670.44px" width="17.2" height="17.2" viewBox="0 0 17.2 17.2"><rect x="0.95" y="0.95" width="15.3" height="15.3" rx="2.2" fill="none" stroke="#1a9c8c" stroke-width="1.9"/><path d="M5 8.6H12" stroke="#1a9c8c" stroke-width="1.9"/></svg><svg class="ic" style="left:1061.40px;top:670.44px" width="8" height="19" viewBox="0 0 8 19"><circle cx="3.4" cy="2.0" r="1.9" fill="#e6e6e6"/><path d="M0 6.1H4.4Q5.1 6.1 5.1 6.8V16H7V18.5H0V16H1.6V8.3H0Z" fill="#e6e6e6"/></svg><svg class="ic" style="left:1072.50px;top:670.44px" width="17.2" height="17.2" viewBox="0 0 17.2 17.2"><rect x="0.95" y="0.95" width="15.3" height="15.3" rx="2.2" fill="none" stroke="#1a9c8c" stroke-width="1.9"/><path d="M5 8.6H12" stroke="#1a9c8c" stroke-width="1.9"/><path d="M8.5 5.1V12.1" stroke="#1a9c8c" stroke-width="1.9"/></svg><svg class="ic" style="left:30.90px;top:708.41px" width="14" height="14" viewBox="0 0 14 14"><path d="M1.75 1.75L12.25 12.25M12.25 1.75L1.75 12.25" stroke="#dc1f2a" stroke-width="2.1"/></svg><svg class="ic" style="left:907.90px;top:707.26px" width="8" height="19" viewBox="0 0 8 19"><circle cx="3.4" cy="2.0" r="1.9" fill="#e6e6e6"/><path d="M0 6.1H4.4Q5.1 6.1 5.1 6.8V16H7V18.5H0V16H1.6V8.3H0Z" fill="#e6e6e6"/></svg><svg class="ic" style="left:918.80px;top:707.26px" width="17.2" height="17.2" viewBox="0 0 17.2 17.2"><rect x="0.95" y="0.95" width="15.3" height="15.3" rx="2.2" fill="none" stroke="#1a9c8c" stroke-width="1.9"/><path d="M5 8.6H12" stroke="#1a9c8c" stroke-width="1.9"/></svg><svg class="ic" style="left:1061.40px;top:707.26px" width="8" height="19" viewBox="0 0 8 19"><circle cx="3.4" cy="2.0" r="1.9" fill="#e6e6e6"/><path d="M0 6.1H4.4Q5.1 6.1 5.1 6.8V16H7V18.5H0V16H1.6V8.3H0Z" fill="#e6e6e6"/></svg><svg class="ic" style="left:1072.50px;top:707.26px" width="17.2" height="17.2" viewBox="0 0 17.2 17.2"><rect x="0.95" y="0.95" width="15.3" height="15.3" rx="2.2" fill="none" stroke="#1a9c8c" stroke-width="1.9"/><path d="M5 8.6H12" stroke="#1a9c8c" stroke-width="1.9"/><path d="M8.5 5.1V12.1" stroke="#1a9c8c" stroke-width="1.9"/></svg><svg class="ic" style="left:29.50px;top:745.18px" width="18" height="14" viewBox="0 0 18 14"><path d="M1.6 7.0L6.6 11.9L16.2 2.0" stroke="#4caf50" stroke-width="2.2" fill="none" stroke-linecap="round" stroke-linejoin="round"/></svg><svg class="ic" style="left:907.90px;top:744.08px" width="8" height="19" viewBox="0 0 8 19"><circle cx="3.4" cy="2.0" r="1.9" fill="#e6e6e6"/><path d="M0 6.1H4.4Q5.1 6.1 5.1 6.8V16H7V18.5H0V16H1.6V8.3H0Z" fill="#e6e6e6"/></svg><svg class="ic" style="left:918.80px;top:744.08px" width="17.2" height="17.2" viewBox="0 0 17.2 17.2"><rect x="0.95" y="0.95" width="15.3" height="15.3" rx="2.2" fill="none" stroke="#1a9c8c" stroke-width="1.9"/><path d="M5 8.6H12" stroke="#1a9c8c" stroke-width="1.9"/></svg><svg class="ic" style="left:1061.40px;top:744.08px" width="8" height="19" viewBox="0 0 8 19"><circle cx="3.4" cy="2.0" r="1.9" fill="#e6e6e6"/><path d="M0 6.1H4.4Q5.1 6.1 5.1 6.8V16H7V18.5H0V16H1.6V8.3H0Z" fill="#e6e6e6"/></svg><svg class="ic" style="left:1072.50px;top:744.08px" width="17.2" height="17.2" viewBox="0 0 17.2 17.2"><rect x="0.95" y="0.95" width="15.3" height="15.3" rx="2.2" fill="none" stroke="#1a9c8c" stroke-width="1.9"/><path d="M5 8.6H12" stroke="#1a9c8c" stroke-width="1.9"/><path d="M8.5 5.1V12.1" stroke="#1a9c8c" stroke-width="1.9"/></svg><svg class="ic" style="left:30.90px;top:782.05px" width="14" height="14" viewBox="0 0 14 14"><path d="M1.75 1.75L12.25 12.25M12.25 1.75L1.75 12.25" stroke="#dc1f2a" stroke-width="2.1"/></svg><svg class="ic" style="left:907.90px;top:780.90px" width="8" height="19" viewBox="0 0 8 19"><circle cx="3.4" cy="2.0" r="1.9" fill="#e6e6e6"/><path d="M0 6.1H4.4Q5.1 6.1 5.1 6.8V16H7V18.5H0V16H1.6V8.3H0Z" fill="#e6e6e6"/></svg><svg class="ic" style="left:918.80px;top:780.90px" width="17.2" height="17.2" viewBox="0 0 17.2 17.2"><rect x="0.95" y="0.95" width="15.3" height="15.3" rx="2.2" fill="none" stroke="#1a9c8c" stroke-width="1.9"/><path d="M5 8.6H12" stroke="#1a9c8c" stroke-width="1.9"/></svg><svg class="ic" style="left:1061.40px;top:780.90px" width="8" height="19" viewBox="0 0 8 19"><circle cx="3.4" cy="2.0" r="1.9" fill="#e6e6e6"/><path d="M0 6.1H4.4Q5.1 6.1 5.1 6.8V16H7V18.5H0V16H1.6V8.3H0Z" fill="#e6e6e6"/></svg><svg class="ic" style="left:1072.50px;top:780.90px" width="17.2" height="17.2" viewBox="0 0 17.2 17.2"><rect x="0.95" y="0.95" width="15.3" height="15.3" rx="2.2" fill="none" stroke="#1a9c8c" stroke-width="1.9"/><path d="M5 8.6H12" stroke="#1a9c8c" stroke-width="1.9"/><path d="M8.5 5.1V12.1" stroke="#1a9c8c" stroke-width="1.9"/></svg><svg class="ic" style="left:30.90px;top:818.87px" width="14" height="14" viewBox="0 0 14 14"><path d="M1.75 1.75L12.25 12.25M12.25 1.75L1.75 12.25" stroke="#dc1f2a" stroke-width="2.1"/></svg><svg class="ic" style="left:907.90px;top:817.72px" width="8" height="19" viewBox="0 0 8 19"><circle cx="3.4" cy="2.0" r="1.9" fill="#e6e6e6"/><path d="M0 6.1H4.4Q5.1 6.1 5.1 6.8V16H7V18.5H0V16H1.6V8.3H0Z" fill="#e6e6e6"/></svg><svg class="ic" style="left:918.80px;top:817.72px" width="17.2" height="17.2" viewBox="0 0 17.2 17.2"><rect x="0.95" y="0.95" width="15.3" height="15.3" rx="2.2" fill="none" stroke="#1a9c8c" stroke-width="1.9"/><path d="M5 8.6H12" stroke="#1a9c8c" stroke-width="1.9"/></svg><svg class="ic" style="left:1061.40px;top:817.72px" width="8" height="19" viewBox="0 0 8 19"><circle cx="3.4" cy="2.0" r="1.9" fill="#e6e6e6"/><path d="M0 6.1H4.4Q5.1 6.1 5.1 6.8V16H7V18.5H0V16H1.6V8.3H0Z" fill="#e6e6e6"/></svg><svg class="ic" style="left:1072.50px;top:817.72px" width="17.2" height="17.2" viewBox="0 0 17.2 17.2"><rect x="0.95" y="0.95" width="15.3" height="15.3" rx="2.2" fill="none" stroke="#1a9c8c" stroke-width="1.9"/><path d="M5 8.6H12" stroke="#1a9c8c" stroke-width="1.9"/><path d="M8.5 5.1V12.1" stroke="#1a9c8c" stroke-width="1.9"/></svg><svg class="ic" style="left:30.90px;top:855.68px" width="14" height="14" viewBox="0 0 14 14"><path d="M1.75 1.75L12.25 12.25M12.25 1.75L1.75 12.25" stroke="#dc1f2a" stroke-width="2.1"/></svg><svg class="ic" style="left:907.90px;top:854.53px" width="8" height="19" viewBox="0 0 8 19"><circle cx="3.4" cy="2.0" r="1.9" fill="#e6e6e6"/><path d="M0 6.1H4.4Q5.1 6.1 5.1 6.8V16H7V18.5H0V16H1.6V8.3H0Z" fill="#e6e6e6"/></svg><svg class="ic" style="left:918.80px;top:854.53px" width="17.2" height="17.2" viewBox="0 0 17.2 17.2"><rect x="0.95" y="0.95" width="15.3" height="15.3" rx="2.2" fill="none" stroke="#1a9c8c" stroke-width="1.9"/><path d="M5 8.6H12" stroke="#1a9c8c" stroke-width="1.9"/></svg><svg class="ic" style="left:1061.40px;top:854.53px" width="8" height="19" viewBox="0 0 8 19"><circle cx="3.4" cy="2.0" r="1.9" fill="#e6e6e6"/><path d="M0 6.1H4.4Q5.1 6.1 5.1 6.8V16H7V18.5H0V16H1.6V8.3H0Z" fill="#e6e6e6"/></svg><svg class="ic" style="left:1072.50px;top:854.53px" width="17.2" height="17.2" viewBox="0 0 17.2 17.2"><rect x="0.95" y="0.95" width="15.3" height="15.3" rx="2.2" fill="none" stroke="#1a9c8c" stroke-width="1.9"/><path d="M5 8.6H12" stroke="#1a9c8c" stroke-width="1.9"/><path d="M8.5 5.1V12.1" stroke="#1a9c8c" stroke-width="1.9"/></svg><svg class="ic" style="left:30.90px;top:892.50px" width="14" height="14" viewBox="0 0 14 14"><path d="M1.75 1.75L12.25 12.25M12.25 1.75L1.75 12.25" stroke="#dc1f2a" stroke-width="2.1"/></svg><svg class="ic" style="left:907.90px;top:891.35px" width="8" height="19" viewBox="0 0 8 19"><circle cx="3.4" cy="2.0" r="1.9" fill="#e6e6e6"/><path d="M0 6.1H4.4Q5.1 6.1 5.1 6.8V16H7V18.5H0V16H1.6V8.3H0Z" fill="#e6e6e6"/></svg><svg class="ic" style="left:918.80px;top:891.35px" width="17.2" height="17.2" viewBox="0 0 17.2 17.2"><rect x="0.95" y="0.95" width="15.3" height="15.3" rx="2.2" fill="none" stroke="#1a9c8c" stroke-width="1.9"/><path d="M5 8.6H12" stroke="#1a9c8c" stroke-width="1.9"/></svg><svg class="ic" style="left:1061.40px;top:891.35px" width="8" height="19" viewBox="0 0 8 19"><circle cx="3.4" cy="2.0" r="1.9" fill="#e6e6e6"/><path d="M0 6.1H4.4Q5.1 6.1 5.1 6.8V16H7V18.5H0V16H1.6V8.3H0Z" fill="#e6e6e6"/></svg><svg class="ic" style="left:1072.50px;top:891.35px" width="17.2" height="17.2" viewBox="0 0 17.2 17.2"><rect x="0.95" y="0.95" width="15.3" height="15.3" rx="2.2" fill="none" stroke="#1a9c8c" stroke-width="1.9"/><path d="M5 8.6H12" stroke="#1a9c8c" stroke-width="1.9"/><path d="M8.5 5.1V12.1" stroke="#1a9c8c" stroke-width="1.9"/></svg><svg class="ic" style="left:30.90px;top:929.32px" width="14" height="14" viewBox="0 0 14 14"><path d="M1.75 1.75L12.25 12.25M12.25 1.75L1.75 12.25" stroke="#dc1f2a" stroke-width="2.1"/></svg><svg class="ic" style="left:907.90px;top:928.17px" width="8" height="19" viewBox="0 0 8 19"><circle cx="3.4" cy="2.0" r="1.9" fill="#e6e6e6"/><path d="M0 6.1H4.4Q5.1 6.1 5.1 6.8V16H7V18.5H0V16H1.6V8.3H0Z" fill="#e6e6e6"/></svg><svg class="ic" style="left:918.80px;top:928.17px" width="17.2" height="17.2" viewBox="0 0 17.2 17.2"><rect x="0.95" y="0.95" width="15.3" height="15.3" rx="2.2" fill="none" stroke="#1a9c8c" stroke-width="1.9"/><path d="M5 8.6H12" stroke="#1a9c8c" stroke-width="1.9"/></svg><svg class="ic" style="left:1061.40px;top:928.17px" width="8" height="19" viewBox="0 0 8 19"><circle cx="3.4" cy="2.0" r="1.9" fill="#e6e6e6"/><path d="M0 6.1H4.4Q5.1 6.1 5.1 6.8V16H7V18.5H0V16H1.6V8.3H0Z" fill="#e6e6e6"/></svg><svg class="ic" style="left:1072.50px;top:928.17px" width="17.2" height="17.2" viewBox="0 0 17.2 17.2"><rect x="0.95" y="0.95" width="15.3" height="15.3" rx="2.2" fill="none" stroke="#1a9c8c" stroke-width="1.9"/><path d="M5 8.6H12" stroke="#1a9c8c" stroke-width="1.9"/><path d="M8.5 5.1V12.1" stroke="#1a9c8c" stroke-width="1.9"/></svg><svg class="ic" style="left:30.90px;top:966.14px" width="14" height="14" viewBox="0 0 14 14"><path d="M1.75 1.75L12.25 12.25M12.25 1.75L1.75 12.25" stroke="#dc1f2a" stroke-width="2.1"/></svg><svg class="ic" style="left:907.90px;top:964.99px" width="8" height="19" viewBox="0 0 8 19"><circle cx="3.4" cy="2.0" r="1.9" fill="#e6e6e6"/><path d="M0 6.1H4.4Q5.1 6.1 5.1 6.8V16H7V18.5H0V16H1.6V8.3H0Z" fill="#e6e6e6"/></svg><svg class="ic" style="left:918.80px;top:964.99px" width="17.2" height="17.2" viewBox="0 0 17.2 17.2"><rect x="0.95" y="0.95" width="15.3" height="15.3" rx="2.2" fill="none" stroke="#1a9c8c" stroke-width="1.9"/><path d="M5 8.6H12" stroke="#1a9c8c" stroke-width="1.9"/></svg><svg class="ic" style="left:1061.40px;top:964.99px" width="8" height="19" viewBox="0 0 8 19"><circle cx="3.4" cy="2.0" r="1.9" fill="#e6e6e6"/><path d="M0 6.1H4.4Q5.1 6.1 5.1 6.8V16H7V18.5H0V16H1.6V8.3H0Z" fill="#e6e6e6"/></svg><svg class="ic" style="left:1072.50px;top:964.99px" width="17.2" height="17.2" viewBox="0 0 17.2 17.2"><rect x="0.95" y="0.95" width="15.3" height="15.3" rx="2.2" fill="none" stroke="#1a9c8c" stroke-width="1.9"/><path d="M5 8.6H12" stroke="#1a9c8c" stroke-width="1.9"/><path d="M8.5 5.1V12.1" stroke="#1a9c8c" stroke-width="1.9"/></svg><svg class="ic" style="left:30.90px;top:1002.96px" width="14" height="14" viewBox="0 0 14 14"><path d="M1.75 1.75L12.25 12.25M12.25 1.75L1.75 12.25" stroke="#dc1f2a" stroke-width="2.1"/></svg><svg class="ic" style="left:907.90px;top:1001.81px" width="8" height="19" viewBox="0 0 8 19"><circle cx="3.4" cy="2.0" r="1.9" fill="#e6e6e6"/><path d="M0 6.1H4.4Q5.1 6.1 5.1 6.8V16H7V18.5H0V16H1.6V8.3H0Z" fill="#e6e6e6"/></svg><svg class="ic" style="left:918.80px;top:1001.81px" width="17.2" height="17.2" viewBox="0 0 17.2 17.2"><rect x="0.95" y="0.95" width="15.3" height="15.3" rx="2.2" fill="none" stroke="#1a9c8c" stroke-width="1.9"/><path d="M5 8.6H12" stroke="#1a9c8c" stroke-width="1.9"/></svg><svg class="ic" style="left:1061.40px;top:1001.81px" width="8" height="19" viewBox="0 0 8 19"><circle cx="3.4" cy="2.0" r="1.9" fill="#e6e6e6"/><path d="M0 6.1H4.4Q5.1 6.1 5.1 6.8V16H7V18.5H0V16H1.6V8.3H0Z" fill="#e6e6e6"/></svg><svg class="ic" style="left:1072.50px;top:1001.81px" width="17.2" height="17.2" viewBox="0 0 17.2 17.2"><rect x="0.95" y="0.95" width="15.3" height="15.3" rx="2.2" fill="none" stroke="#1a9c8c" stroke-width="1.9"/><path d="M5 8.6H12" stroke="#1a9c8c" stroke-width="1.9"/><path d="M8.5 5.1V12.1" stroke="#1a9c8c" stroke-width="1.9"/></svg><svg class="ic" style="left:30.90px;top:1039.77px" width="14" height="14" viewBox="0 0 14 14"><path d="M1.75 1.75L12.25 12.25M12.25 1.75L1.75 12.25" stroke="#dc1f2a" stroke-width="2.1"/></svg><svg class="ic" style="left:907.90px;top:1038.62px" width="8" height="19" viewBox="0 0 8 19"><circle cx="3.4" cy="2.0" r="1.9" fill="#e6e6e6"/><path d="M0 6.1H4.4Q5.1 6.1 5.1 6.8V16H7V18.5H0V16H1.6V8.3H0Z" fill="#e6e6e6"/></svg><svg class="ic" style="left:918.80px;top:1038.62px" width="17.2" height="17.2" viewBox="0 0 17.2 17.2"><rect x="0.95" y="0.95" width="15.3" height="15.3" rx="2.2" fill="none" stroke="#1a9c8c" stroke-width="1.9"/><path d="M5 8.6H12" stroke="#1a9c8c" stroke-width="1.9"/></svg><svg class="ic" style="left:1061.40px;top:1038.62px" width="8" height="19" viewBox="0 0 8 19"><circle cx="3.4" cy="2.0" r="1.9" fill="#e6e6e6"/><path d="M0 6.1H4.4Q5.1 6.1 5.1 6.8V16H7V18.5H0V16H1.6V8.3H0Z" fill="#e6e6e6"/></svg><svg class="ic" style="left:1072.50px;top:1038.62px" width="17.2" height="17.2" viewBox="0 0 17.2 17.2"><rect x="0.95" y="0.95" width="15.3" height="15.3" rx="2.2" fill="none" stroke="#1a9c8c" stroke-width="1.9"/><path d="M5 8.6H12" stroke="#1a9c8c" stroke-width="1.9"/><path d="M8.5 5.1V12.1" stroke="#1a9c8c" stroke-width="1.9"/></svg><svg class="ic" style="left:30.90px;top:1076.59px" width="14" height="14" viewBox="0 0 14 14"><path d="M1.75 1.75L12.25 12.25M12.25 1.75L1.75 12.25" stroke="#dc1f2a" stroke-width="2.1"/></svg><svg class="ic" style="left:907.90px;top:1075.44px" width="8" height="19" viewBox="0 0 8 19"><circle cx="3.4" cy="2.0" r="1.9" fill="#e6e6e6"/><path d="M0 6.1H4.4Q5.1 6.1 5.1 6.8V16H7V18.5H0V16H1.6V8.3H0Z" fill="#e6e6e6"/></svg><svg class="ic" style="left:918.80px;top:1075.44px" width="17.2" height="17.2" viewBox="0 0 17.2 17.2"><rect x="0.95" y="0.95" width="15.3" height="15.3" rx="2.2" fill="none" stroke="#1a9c8c" stroke-width="1.9"/><path d="M5 8.6H12" stroke="#1a9c8c" stroke-width="1.9"/></svg><svg class="ic" style="left:1061.40px;top:1075.44px" width="8" height="19" viewBox="0 0 8 19"><circle cx="3.4" cy="2.0" r="1.9" fill="#e6e6e6"/><path d="M0 6.1H4.4Q5.1 6.1 5.1 6.8V16H7V18.5H0V16H1.6V8.3H0Z" fill="#e6e6e6"/></svg><svg class="ic" style="left:1072.50px;top:1075.44px" width="17.2" height="17.2" viewBox="0 0 17.2 17.2"><rect x="0.95" y="0.95" width="15.3" height="15.3" rx="2.2" fill="none" stroke="#1a9c8c" stroke-width="1.9"/><path d="M5 8.6H12" stroke="#1a9c8c" stroke-width="1.9"/><path d="M8.5 5.1V12.1" stroke="#1a9c8c" stroke-width="1.9"/></svg><svg class="ic" style="left:30.90px;top:1113.41px" width="14" height="14" viewBox="0 0 14 14"><path d="M1.75 1.75L12.25 12.25M12.25 1.75L1.75 12.25" stroke="#dc1f2a" stroke-width="2.1"/></svg><svg class="ic" style="left:907.90px;top:1112.26px" width="8" height="19" viewBox="0 0 8 19"><circle cx="3.4" cy="2.0" r="1.9" fill="#e6e6e6"/><path d="M0 6.1H4.4Q5.1 6.1 5.1 6.8V16H7V18.5H0V16H1.6V8.3H0Z" fill="#e6e6e6"/></svg><svg class="ic" style="left:918.80px;top:1112.26px" width="17.2" height="17.2" viewBox="0 0 17.2 17.2"><rect x="0.95" y="0.95" width="15.3" height="15.3" rx="2.2" fill="none" stroke="#1a9c8c" stroke-width="1.9"/><path d="M5 8.6H12" stroke="#1a9c8c" stroke-width="1.9"/></svg><svg class="ic" style="left:1061.40px;top:1112.26px" width="8" height="19" viewBox="0 0 8 19"><circle cx="3.4" cy="2.0" r="1.9" fill="#e6e6e6"/><path d="M0 6.1H4.4Q5.1 6.1 5.1 6.8V16H7V18.5H0V16H1.6V8.3H0Z" fill="#e6e6e6"/></svg><svg class="ic" style="left:1072.50px;top:1112.26px" width="17.2" height="17.2" viewBox="0 0 17.2 17.2"><rect x="0.95" y="0.95" width="15.3" height="15.3" rx="2.2" fill="none" stroke="#1a9c8c" stroke-width="1.9"/><path d="M5 8.6H12" stroke="#1a9c8c" stroke-width="1.9"/><path d="M8.5 5.1V12.1" stroke="#1a9c8c" stroke-width="1.9"/></svg><svg class="ic" style="left:30.90px;top:1150.23px" width="14" height="14" viewBox="0 0 14 14"><path d="M1.75 1.75L12.25 12.25M12.25 1.75L1.75 12.25" stroke="#dc1f2a" stroke-width="2.1"/></svg><svg class="ic" style="left:907.90px;top:1149.08px" width="8" height="19" viewBox="0 0 8 19"><circle cx="3.4" cy="2.0" r="1.9" fill="#e6e6e6"/><path d="M0 6.1H4.4Q5.1 6.1 5.1 6.8V16H7V18.5H0V16H1.6V8.3H0Z" fill="#e6e6e6"/></svg><svg class="ic" style="left:918.80px;top:1149.08px" width="17.2" height="17.2" viewBox="0 0 17.2 17.2"><rect x="0.95" y="0.95" width="15.3" height="15.3" rx="2.2" fill="none" stroke="#1a9c8c" stroke-width="1.9"/><path d="M5 8.6H12" stroke="#1a9c8c" stroke-width="1.9"/></svg><svg class="ic" style="left:1061.40px;top:1149.08px" width="8" height="19" viewBox="0 0 8 19"><circle cx="3.4" cy="2.0" r="1.9" fill="#e6e6e6"/><path d="M0 6.1H4.4Q5.1 6.1 5.1 6.8V16H7V18.5H0V16H1.6V8.3H0Z" fill="#e6e6e6"/></svg><svg class="ic" style="left:1072.50px;top:1149.08px" width="17.2" height="17.2" viewBox="0 0 17.2 17.2"><rect x="0.95" y="0.95" width="15.3" height="15.3" rx="2.2" fill="none" stroke="#1a9c8c" stroke-width="1.9"/><path d="M5 8.6H12" stroke="#1a9c8c" stroke-width="1.9"/><path d="M8.5 5.1V12.1" stroke="#1a9c8c" stroke-width="1.9"/></svg><svg class="ic" style="left:29.50px;top:1187.00px" width="18" height="14" viewBox="0 0 18 14"><path d="M1.6 7.0L6.6 11.9L16.2 2.0" stroke="#4caf50" stroke-width="2.2" fill="none" stroke-linecap="round" stroke-linejoin="round"/></svg><svg class="ic" style="left:907.90px;top:1185.90px" width="8" height="19" viewBox="0 0 8 19"><circle cx="3.4" cy="2.0" r="1.9" fill="#e6e6e6"/><path d="M0 6.1H4.4Q5.1 6.1 5.1 6.8V16H7V18.5H0V16H1.6V8.3H0Z" fill="#e6e6e6"/></svg><svg class="ic" style="left:918.80px;top:1185.90px" width="17.2" height="17.2" viewBox="0 0 17.2 17.2"><rect x="0.95" y="0.95" width="15.3" height="15.3" rx="2.2" fill="none" stroke="#1a9c8c" stroke-width="1.9"/><path d="M5 8.6H12" stroke="#1a9c8c" stroke-width="1.9"/></svg><svg class="ic" style="left:1061.40px;top:1185.90px" width="8" height="19" viewBox="0 0 8 19"><circle cx="3.4" cy="2.0" r="1.9" fill="#e6e6e6"/><path d="M0 6.1H4.4Q5.1 6.1 5.1 6.8V16H7V18.5H0V16H1.6V8.3H0Z" fill="#e6e6e6"/></svg><svg class="ic" style="left:1072.50px;top:1185.90px" width="17.2" height="17.2" viewBox="0 0 17.2 17.2"><rect x="0.95" y="0.95" width="15.3" height="15.3" rx="2.2" fill="none" stroke="#1a9c8c" stroke-width="1.9"/><path d="M5 8.6H12" stroke="#1a9c8c" stroke-width="1.9"/><path d="M8.5 5.1V12.1" stroke="#1a9c8c" stroke-width="1.9"/></svg><svg class="ic" style="left:30.90px;top:1223.86px" width="14" height="14" viewBox="0 0 14 14"><path d="M1.75 1.75L12.25 12.25M12.25 1.75L1.75 12.25" stroke="#dc1f2a" stroke-width="2.1"/></svg><svg class="ic" style="left:907.90px;top:1222.71px" width="8" height="19" viewBox="0 0 8 19"><circle cx="3.4" cy="2.0" r="1.9" fill="#e6e6e6"/><path d="M0 6.1H4.4Q5.1 6.1 5.1 6.8V16H7V18.5H0V16H1.6V8.3H0Z" fill="#e6e6e6"/></svg><svg class="ic" style="left:918.80px;top:1222.71px" width="17.2" height="17.2" viewBox="0 0 17.2 17.2"><rect x="0.95" y="0.95" width="15.3" height="15.3" rx="2.2" fill="none" stroke="#1a9c8c" stroke-width="1.9"/><path d="M5 8.6H12" stroke="#1a9c8c" stroke-width="1.9"/></svg><svg class="ic" style="left:1061.40px;top:1222.71px" width="8" height="19" viewBox="0 0 8 19"><circle cx="3.4" cy="2.0" r="1.9" fill="#e6e6e6"/><path d="M0 6.1H4.4Q5.1 6.1 5.1 6.8V16H7V18.5H0V16H1.6V8.3H0Z" fill="#e6e6e6"/></svg><svg class="ic" style="left:1072.50px;top:1222.71px" width="17.2" height="17.2" viewBox="0 0 17.2 17.2"><rect x="0.95" y="0.95" width="15.3" height="15.3" rx="2.2" fill="none" stroke="#1a9c8c" stroke-width="1.9"/><path d="M5 8.6H12" stroke="#1a9c8c" stroke-width="1.9"/><path d="M8.5 5.1V12.1" stroke="#1a9c8c" stroke-width="1.9"/></svg>
</body></html>
